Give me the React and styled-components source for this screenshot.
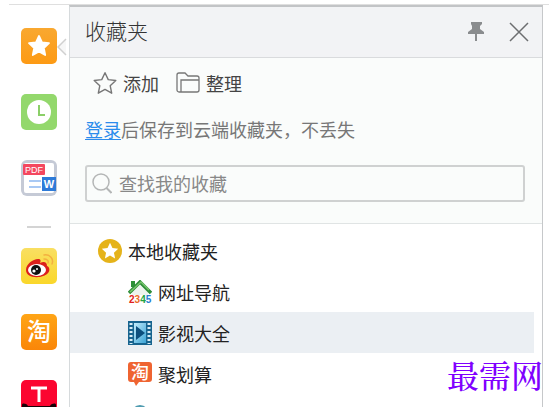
import React, { useState } from 'react';
import styled, { createGlobalStyle, css } from 'styled-components';

const GlobalStyle = createGlobalStyle`
  * {
    box-sizing: border-box;
  }

  body {
    margin: 0;
    overflow: hidden;
    background: #fff;
    color: #222;
    font-family: 'Noto Sans CJK SC', sans-serif;
    font-size: 18px;
    font-weight: 400;
  }

  button,
  input {
    font: inherit;
    color: inherit;
  }

  svg {
    display: block;
    flex: none;
  }
`;

const Page = styled.div`
  position: relative;
  display: flex;
  height: 100vh;
  margin: 4px 11px 0 9px;
  border-top: 1px solid #dfdfdf;
  overflow: hidden;
`;

const Sidebar = styled.nav`
  flex: none;
  display: flex;
  flex-direction: column;
  align-items: center;
  width: 60px;
  padding-top: 23px;
`;

const AppButton = styled.button`
  position: relative;
  flex: none;
  width: 36px;
  height: 36px;
  margin-bottom: 30px;
  padding: 0;
  border: 0;
  background: none;
  cursor: pointer;
`;

const Pointer = styled.svg`
  position: absolute;
  top: 10px;
  left: 36px;
`;

const Divider = styled.hr`
  flex: none;
  width: 24px;
  height: 2px;
  margin: 0 0 20px;
  border: 0;
  background: #d4d4d4;
`;

const Panel = styled.main`
  flex: 1;
  margin-right: 6px;
  border: 1px solid #d6dadc;
  border-top: 2px solid #c2c4c6;
  border-right-color: #c6c8ca;
  border-bottom: 0;
`;

const Header = styled.header`
  display: flex;
  align-items: center;
  height: 51px;
  padding: 0 13px 0 15px;
  border-bottom: 1px solid #d9dbdd;
  background: #f2f3f5;
`;

const Title = styled.h1`
  flex: 1;
  margin: 0;
  padding-bottom: 4px;
  color: #333;
  font-size: 21px;
  font-weight: 300;
  line-height: 30px;
`;

const IconButton = styled.button`
  padding: 0;
  border: 0;
  margin-left: 24px;
  background: none;
  cursor: pointer;
`;

const Tools = styled.section`
  padding: 11px 17px 21px 15px;
  border-bottom: 1px solid #e0e4e4;
  background: #fafcfb;
`;

const Actions = styled.div`
  display: flex;
  gap: 17px;
  padding-left: 8px;
`;

const Action = styled.button`
  display: flex;
  align-items: center;
  gap: 5px;
  height: 28px;
  padding: 0;
  border: 0;
  background: none;
  color: #444;
  cursor: pointer;
`;

const Hint = styled.p`
  margin: 18px 0 22px;
  color: #777;
  line-height: 28px;
`;

const LoginLink = styled.a`
  color: #2b8cec;
  text-underline-offset: 2px;
`;

const SearchBox = styled.label`
  display: flex;
  align-items: center;
  gap: 7px;
  height: 37px;
  padding: 0 6px 2px 5px;
  border: 2px solid #cfd1d1;
  border-radius: 3px;
`;

const SearchInput = styled.input`
  flex: 1;
  min-width: 0;
  padding: 0;
  border: 0;
  outline: 0;
  background: none;

  &::placeholder {
    color: #888;
    opacity: 1;
  }
`;

const List = styled.ul`
  margin: 0;
  padding: 6px 8px 0 0;
  list-style: none;
`;

const Row = styled.a`
  display: flex;
  align-items: center;
  gap: 6px;
  height: 41px;
  padding-left: 28px;
  color: #222;
  text-decoration: none;

  ${(props) =>
    props.$nested &&
    css`
      padding-left: 58px;
    `}

  ${(props) =>
    props.$active &&
    css`
      background: #ebeff3;
    `}
`;

const Watermark = styled.div`
  position: absolute;
  right: 6px;
  top: 347px;
  color: #8000ff;
  font-family: 'Noto Serif CJK SC', 'Noto Sans CJK SC', serif;
  font-size: 32px;
  font-weight: 500;
  line-height: 44px;
`;

const STAR = 'M0 -10 L3 -3.6 L10 -2.8 L4.8 2 L6.2 9 L0 5.5 L-6.2 9 L-4.8 2 L-10 -2.8 L-3 -3.6 Z';

const FavouritesIcon = () => (
  <svg width="36" height="36" viewBox="0 0 36 36">
    <defs>
      <linearGradient id="fav" x1="0" y1="0" x2="0" y2="1">
        <stop offset="0" stopColor="#f9a830" />
        <stop offset="1" stopColor="#fd9a14" />
      </linearGradient>
    </defs>
    <rect width="36" height="36" rx="5" fill="url(#fav)" />
    <path d={STAR} transform="translate(18 18)" fill="#fff" stroke="#fff" strokeWidth="1.8" strokeLinejoin="round" />
  </svg>
);

const HistoryIcon = () => (
  <svg width="36" height="36" viewBox="0 0 36 36">
    <rect width="36" height="36" rx="5" fill="#93d86c" />
    <circle cx="18" cy="18" r="12" fill="#fff" />
    <path d="M18 11v10h6" fill="none" stroke="#8bcf68" strokeWidth="2" />
  </svg>
);

const PdfIcon = () => (
  <svg width="36" height="36" viewBox="0 0 36 36">
    <rect width="36" height="36" rx="6" fill="#c5cad6" />
    <rect x="3" y="3" width="30" height="30" rx="2" fill="#fff" />
    <rect x="2" y="4" width="22" height="11" rx="1" fill="#f4475f" />
    <text x="13" y="13" textAnchor="middle" fontFamily="Liberation Sans, sans-serif" fontSize="9" fill="#fff">
      PDF
    </text>
    <path d="M8 21h12M8 27h12" stroke="#a9c9f4" strokeWidth="2" />
    <rect x="21" y="17" width="14" height="14" fill="#2e7ad8" />
    <text x="28" y="28" textAnchor="middle" fontFamily="Liberation Sans, sans-serif" fontSize="11" fontWeight="700" fill="#fff">
      W
    </text>
  </svg>
);

const WeiboIcon = () => (
  <svg width="36" height="36" viewBox="0 0 36 36">
    <defs>
      <linearGradient id="weibo" x1="0" y1="0" x2="0" y2="1">
        <stop offset="0" stopColor="#f9df62" />
        <stop offset="1" stopColor="#fad72a" />
      </linearGradient>
    </defs>
    <rect width="36" height="36" rx="5" fill="url(#weibo)" />
    <path
      d="M5 22c0-6 7-11 12-11 3 0 3 2 2 4 4-2 7-1 7 3 3 1 3 5 1 7-5 6-22 6-22-3z"
      fill="#dc1f1b"
    />
    <ellipse cx="16" cy="22" rx="9" ry="6" fill="#fff" />
    <circle cx="15" cy="22" r="5" fill="#111" />
    <circle cx="13" cy="23" r="1.6" fill="#fff" />
    <circle cx="16" cy="21" r="1" fill="#fff" />
    <path d="M23 7c6-1 10 4 8 9M23 11c3 0 5 2 4 4" fill="none" stroke="#f3b040" strokeWidth="1.5" strokeLinecap="round" />
  </svg>
);

const TaobaoIcon = () => (
  <svg width="36" height="36" viewBox="0 0 36 36">
    <defs>
      <linearGradient id="tao" x1="0" y1="0" x2="0" y2="1">
        <stop offset="0" stopColor="#ffa516" />
        <stop offset="1" stopColor="#fa8608" />
      </linearGradient>
    </defs>
    <rect width="36" height="36" rx="5" fill="url(#tao)" />
    <text x="18" y="26" textAnchor="middle" fontFamily="Noto Sans CJK SC, sans-serif" fontSize="24" fontWeight="500" fill="#fff">
      淘
    </text>
  </svg>
);

const TmallIcon = () => (
  <svg width="36" height="36" viewBox="0 0 36 36">
    <rect width="36" height="36" rx="5" fill="#fb0530" />
    <path d="M10 8h16M18 8v14" stroke="#fff" strokeWidth="3" />
    <path d="M1 36V25c0-2 4-2 6 1h22c2-3 6-3 6-1v11z" fill="#180308" />
  </svg>
);

const PinIcon = () => (
  <svg width="18" height="20" viewBox="0 0 18 20">
    <path d="M4 0h11v2l-2 2v3l4 3v2H1v-2l4-3V4L4 2z" fill="#8a8c8e" />
    <path d="M9 11v8" stroke="#8a8c8e" strokeWidth="2" />
  </svg>
);

const CloseIcon = () => (
  <svg width="20" height="20" viewBox="0 0 20 20">
    <path d="M1 1l18 18M19 1L1 19" stroke="#6c6e70" strokeWidth="1.5" />
  </svg>
);

const AddIcon = () => (
  <svg width="25" height="25" viewBox="0 0 25 25">
    <path d={STAR} transform="translate(12 12.5) scale(1.08)" fill="none" stroke="#777" strokeWidth="1.3" strokeLinejoin="round" />
  </svg>
);

const FolderIcon = () => (
  <svg width="25" height="22" viewBox="0 0 25 22">
    <path
      d="M5 20H3a2 2 0 0 1-2-2V3a2 2 0 0 1 2-2h6l3 3h9a2 2 0 0 1 2 2v12a2 2 0 0 1-2 2H5V8h18"
      fill="none"
      stroke="#777"
      strokeWidth="1.3"
    />
  </svg>
);

const SearchIcon = () => (
  <svg width="20" height="22" viewBox="0 0 20 22">
    <circle cx="9" cy="10" r="8" fill="none" stroke="#b4b6b6" strokeWidth="1.5" />
    <path d="M14.5 16l5 5" stroke="#b4b6b6" strokeWidth="2" />
  </svg>
);

const LocalIcon = () => (
  <svg width="24" height="24" viewBox="0 0 24 24">
    <circle cx="12" cy="12" r="12" fill="#e5b31a" />
    <path d={STAR} transform="translate(12 12) scale(0.82)" fill="#fff" />
  </svg>
);

const HomeIcon = () => (
  <svg width="24" height="24" viewBox="0 0 24 24">
    <path d="M3 1h4v6H3z" fill="#2e9038" />
    <path d="M4 12l8-7 8 7v3H4z" fill="#eef3ee" />
    <path d="M1 13L12 2l11 11" fill="none" stroke="#2d8d38" strokeWidth="3.5" />
    <path d="M2 12L13 2l8 8" fill="none" stroke="#78c56d" strokeWidth="1.5" />
    <text x="1" y="23" fontFamily="Liberation Sans, sans-serif" fontSize="10" fontWeight="700">
      <tspan fill="#e02020">2</tspan>
      <tspan fill="#ec6b25">3</tspan>
      <tspan fill="#23a342">4</tspan>
      <tspan fill="#287ed1">5</tspan>
    </text>
  </svg>
);

const FilmIcon = () => (
  <svg width="24" height="24" viewBox="0 0 24 24">
    <defs>
      <linearGradient id="film" x1="0" y1="0" x2="1" y2="1">
        <stop offset="0" stopColor="#c2ecfb" />
        <stop offset="1" stopColor="#3ba4d6" />
      </linearGradient>
    </defs>
    <rect width="24" height="24" fill="#17648f" />
    <path d="M3 2v21M21 2v21" stroke="#d9edf6" strokeWidth="3" strokeDasharray="2 2" />
    <rect x="6" y="2" width="12" height="20" fill="url(#film)" />
    <path d="M8 5l9 7-9 7z" fill="#0c4f7d" />
  </svg>
);

const DealsIcon = () => (
  <svg width="24" height="24" viewBox="0 0 24 24">
    <path d="M3 0h18a3 3 0 0 1 3 3v14a3 3 0 0 1-3 3H11l-3 4-2-4H3a3 3 0 0 1-3-3V3a3 3 0 0 1 3-3z" fill="#ef6431" />
    <text x="12" y="17" textAnchor="middle" fontFamily="Noto Sans CJK SC, sans-serif" fontSize="18" fontWeight="500" fill="#fff">
      淘
    </text>
  </svg>
);

const GlobeIcon = () => (
  <svg width="24" height="24" viewBox="0 0 24 24">
    <circle cx="12" cy="11" r="9" fill="#4e9bb0" />
  </svg>
);

const bookmarks = [
  { name: '本地收藏夹', icon: <LocalIcon /> },
  { name: '网址导航', icon: <HomeIcon />, nested: true },
  { name: '影视大全', icon: <FilmIcon />, nested: true },
  { name: '聚划算', icon: <DealsIcon />, nested: true },
  { name: '', icon: <GlobeIcon />, nested: true },
];

const App = () => {
  const [query, setQuery] = useState('');
  const [selected, setSelected] = useState(2);

  return (
    <>
      <GlobalStyle />
      <Page>
        <Sidebar>
          <AppButton aria-label="收藏夹">
            <FavouritesIcon />
            <Pointer width="10" height="18" viewBox="0 0 10 18">
              <path d="M9 1L1 9l8 8" fill="#f7f7f7" stroke="#d0d0d0" strokeWidth="1.5" />
            </Pointer>
          </AppButton>
          <AppButton aria-label="历史">
            <HistoryIcon />
          </AppButton>
          <AppButton aria-label="PDF">
            <PdfIcon />
          </AppButton>
          <Divider />
          <AppButton aria-label="微博">
            <WeiboIcon />
          </AppButton>
          <AppButton aria-label="淘宝">
            <TaobaoIcon />
          </AppButton>
          <AppButton aria-label="天猫">
            <TmallIcon />
          </AppButton>
        </Sidebar>

        <Panel>
          <Header>
            <Title>收藏夹</Title>
            <IconButton aria-label="固定">
              <PinIcon />
            </IconButton>
            <IconButton aria-label="关闭">
              <CloseIcon />
            </IconButton>
          </Header>

          <Tools>
            <Actions>
              <Action>
                <AddIcon />
                添加
              </Action>
              <Action>
                <FolderIcon />
                整理
              </Action>
            </Actions>
            <Hint>
              <LoginLink href="#login">登录</LoginLink>
              {'后保存到云端收藏夹\uff0c不丢失'}
            </Hint>
            <SearchBox>
              <SearchIcon />
              <SearchInput
                type="text"
                aria-label="查找我的收藏"
                placeholder="查找我的收藏"
                value={query}
                onChange={(e) => setQuery(e.target.value)}
              />
            </SearchBox>
          </Tools>

          <List>
            {bookmarks.map((item, i) => (
              <li key={i}>
                <Row
                  href="#bookmark"
                  aria-label={item.name || '网站'}
                  $nested={item.nested}
                  $active={i === selected}
                  onClick={() => setSelected(i)}
                >
                  {item.icon}
                  {item.name}
                </Row>
              </li>
            ))}
          </List>
        </Panel>
        <Watermark>最需网</Watermark>
      </Page>
    </>
  );
};

export default App;
